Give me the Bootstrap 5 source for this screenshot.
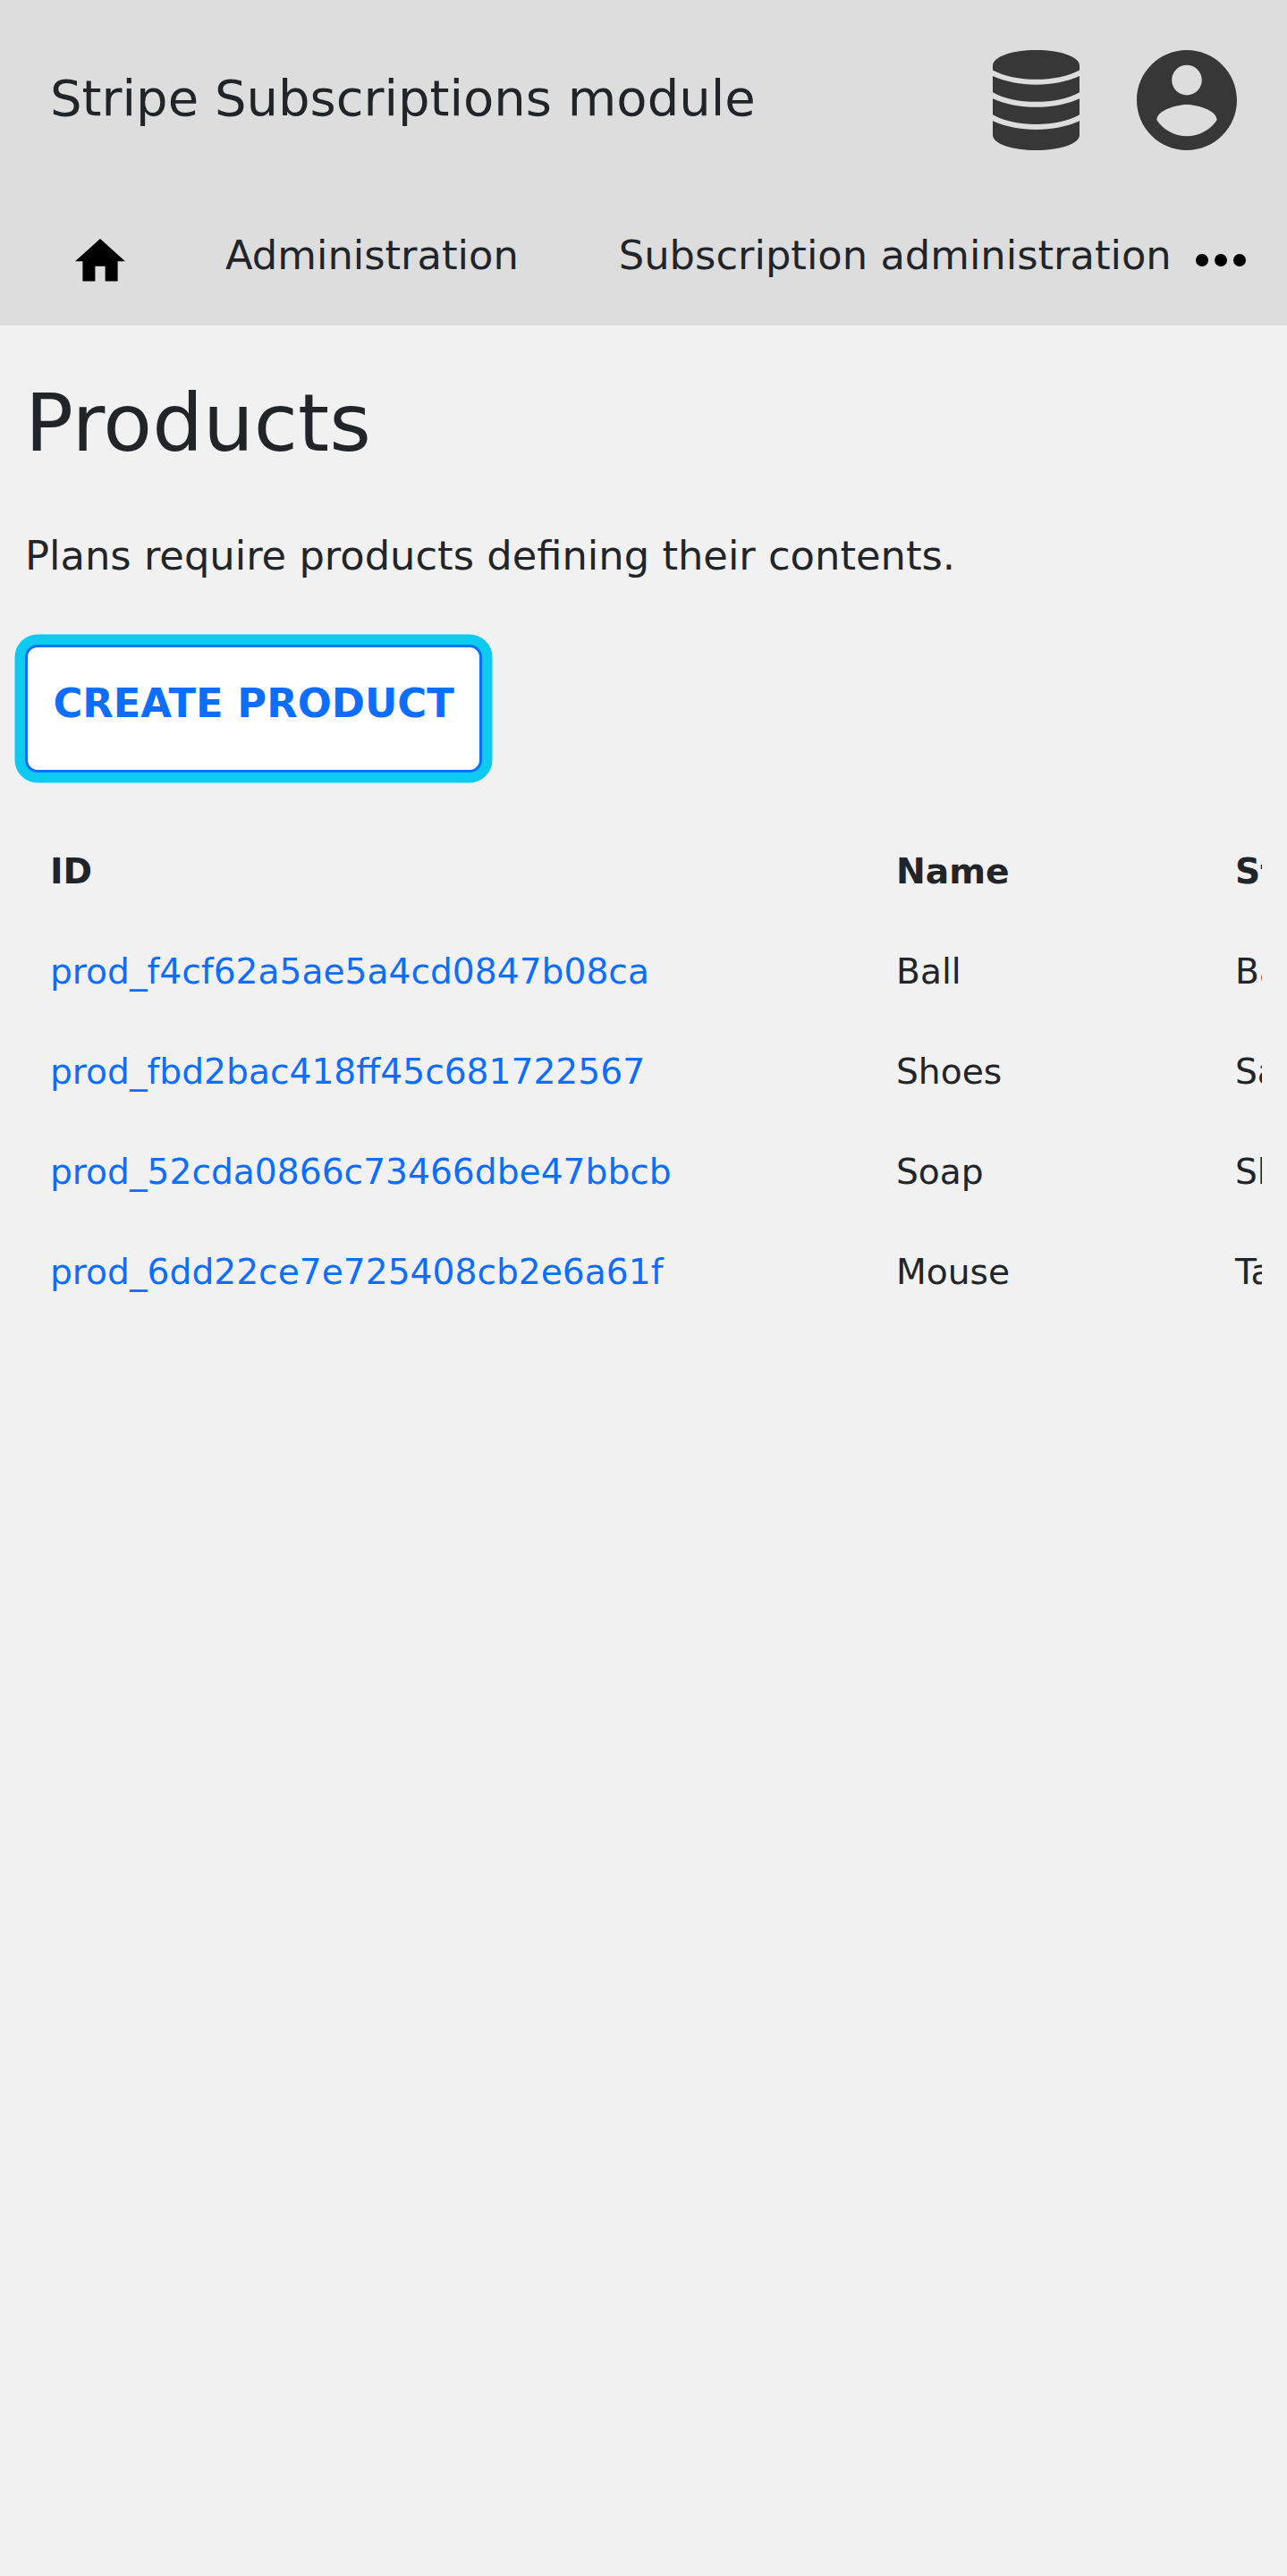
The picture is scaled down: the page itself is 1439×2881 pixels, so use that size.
<!DOCTYPE html>
<html lang="en">
<head>
<meta charset="utf-8">
<meta name="viewport" content="width=device-width, initial-scale=1">
<title>Products</title>
<link href="https://cdn.jsdelivr.net/npm/bootstrap@5.3.0/dist/css/bootstrap.min.css" rel="stylesheet">
<style>
body { font-family: "DejaVu Sans", sans-serif; font-size: 44.8px; line-height: 1.5; color: #212529; background: #f1f1f1; min-height: 100vh; }
.site-header { background: #ddd; height: 364px; }
.title-bar { height: 224px; padding: 0 56px; }
.site-title { font-size: 56px; font-weight: 400; line-height: 84px; margin-top: -4px; }
.account-icons { gap: 64px; color: #373737; }
.site-nav { padding: 28px 46px 0 28px; height: 140px; }
.site-nav .nav-link { padding: 0 56px; color: inherit; line-height: 67.2px; white-space: nowrap; }
.site-nav .home-link { padding-top: 15px; }
.site-nav .last-link { padding-right: 0; }
.more-btn { padding: 32px 0 0; color: #000; line-height: 0; }
main { padding: 56px 28px 0; }
h1.page-title { font-size: 89.6px; font-weight: 400; line-height: 1.2; margin-bottom: 60.5px; }
.intro { margin-bottom: 65.5px; }
.create-btn { height: 143.5px; padding: 29.5px 28.4px; border: 3px solid #0d6efd; border-radius: 14px; background: #fff; color: #0d6efd; font-size: 44.8px; font-weight: 700; line-height: 67.2px; box-shadow: 0 0 0 11.5px #0dcaf0; }
.table-clip { margin-top: 55px; overflow: hidden; }
.products-table { width: 1703px; table-layout: fixed; font-size: 39.2px; line-height: 56px; --bs-table-bg: transparent; --bs-table-color: #212529; }
.products-table > :not(caption) > * > * { padding: 28px; border: 0; white-space: nowrap; }
.products-table .id-col { width: 946px; }
.products-table .name-col { width: 379px; }
</style>
</head>
<body>
<header class="site-header">
  <div class="title-bar d-flex align-items-center justify-content-between">
    <div class="site-title">Stripe Subscriptions module</div>
    <div class="account-icons d-flex align-items-center">
      <svg width="97" height="112" viewBox="0 0 290 335" preserveAspectRatio="none" fill="currentColor" aria-hidden="true">
        <path d="M0 52C0 22 65 0 145 0S290 22 290 52V67C253 87 200 98 145 98S37 87 0 67Z"/>
        <path d="M0 87C42 106 92 116 145 116S248 106 290 87V141C253 162 200 173 145 173S37 162 0 141Z"/>
        <path d="M0 162C42 181 92 191 145 191S248 181 290 162V216C253 237 200 248 145 248S37 237 0 216Z"/>
        <path d="M0 237C42 256 92 266 145 266S248 256 290 237V284C290 313 225 335 145 335S0 313 0 284Z"/>
      </svg>
      <svg width="112" height="112" viewBox="2 2 20 20" fill="currentColor" aria-hidden="true">
        <path d="M12 2C6.48 2 2 6.48 2 12s4.48 10 10 10 10-4.48 10-10S17.52 2 12 2zm0 3c1.66 0 3 1.34 3 3s-1.34 3-3 3-3-1.34-3-3 1.34-3 3-3zm0 14.2c-2.5 0-4.71-1.28-6-3.22.03-1.99 4-3.08 6-3.08 1.99 0 5.97 1.09 6 3.08-1.29 1.94-3.5 3.22-6 3.22z"/>
      </svg>
    </div>
  </div>
  <nav class="site-nav d-flex align-items-start justify-content-between">
    <div class="nav flex-nowrap">
      <a class="nav-link home-link" href="#" aria-label="Home"><svg class="d-block" width="56" height="47.6" viewBox="2 3 20 17" fill="#000"><path d="M10 20v-6h4v6h5v-8h3L12 3 2 12h3v8z"/></svg></a>
      <a class="nav-link" href="#">Administration</a>
      <a class="nav-link last-link" href="#">Subscription administration</a>
    </div>
    <button class="more-btn border-0 bg-transparent" type="button" aria-label="More"><svg width="56" height="14" viewBox="4 10 16 4" fill="currentColor"><circle cx="6" cy="12" r="2"/><circle cx="12" cy="12" r="2"/><circle cx="18" cy="12" r="2"/></svg></button>
  </nav>
</header>
<main>
  <h1 class="page-title">Products</h1>
  <p class="intro">Plans require products defining their contents.</p>
  <button class="create-btn btn d-flex align-items-start" type="button">CREATE PRODUCT</button>
  <div class="table-clip">
    <table class="products-table table mb-0">
      <thead><tr><th class="id-col">ID</th><th class="name-col">Name</th><th>Statement descriptor</th></tr></thead>
      <tbody>
        <tr><td><a class="text-decoration-none" href="#">prod_f4cf62a5ae5a4cd0847b08ca</a></td><td>Ball</td><td>Ball</td></tr>
        <tr><td><a class="text-decoration-none" href="#">prod_fbd2bac418ff45c681722567</a></td><td>Shoes</td><td>Sandals</td></tr>
        <tr><td><a class="text-decoration-none" href="#">prod_52cda0866c73466dbe47bbcb</a></td><td>Soap</td><td>Shampoo</td></tr>
        <tr><td><a class="text-decoration-none" href="#">prod_6dd22ce7e725408cb2e6a61f</a></td><td>Mouse</td><td>Tablet</td></tr>
      </tbody>
    </table>
  </div>
</main>
<script src="https://cdn.jsdelivr.net/npm/bootstrap@5.3.0/dist/js/bootstrap.bundle.min.js"></script>
</body>
</html>
